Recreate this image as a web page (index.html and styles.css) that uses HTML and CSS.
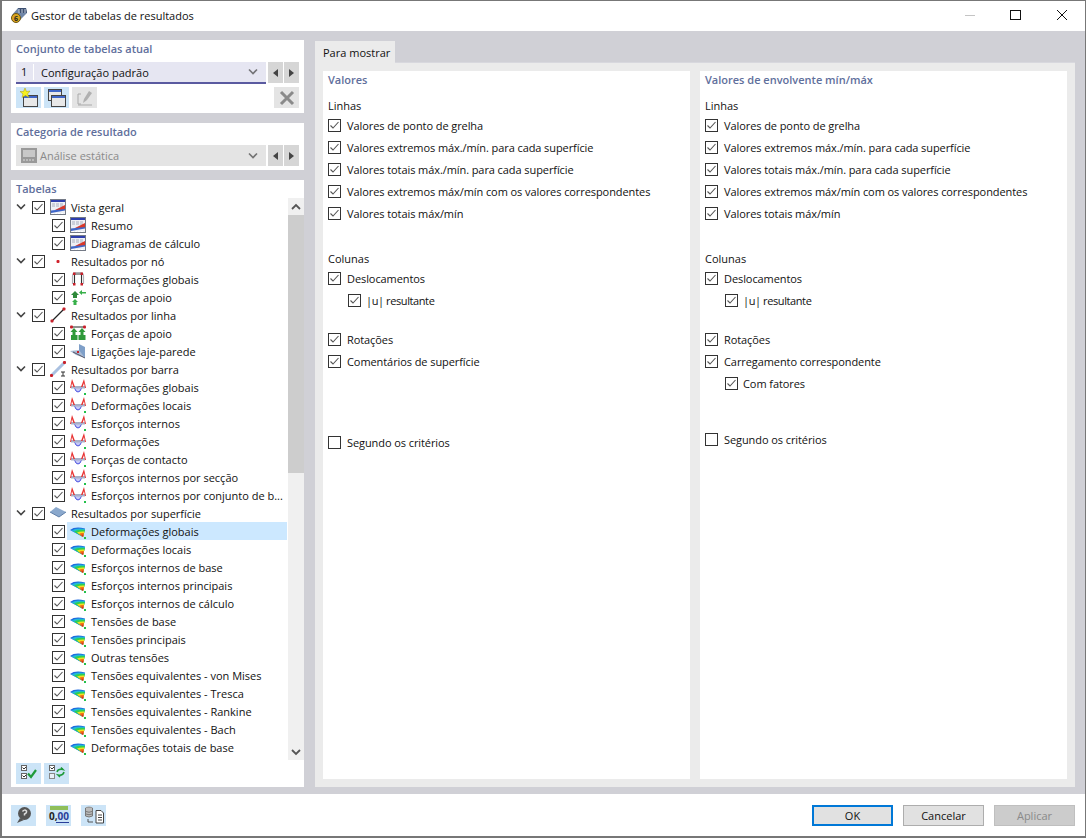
FILE: index.html
```html
<!DOCTYPE html>
<html lang="pt">
<head>
<meta charset="utf-8">
<title>Gestor de tabelas de resultados</title>
<link rel="stylesheet" href="styles.css">
</head>
<body>
<svg class="defs" width="0" height="0">
  <symbol id="chk" viewBox="0 0 13 13"><rect x="0.5" y="0.5" width="12" height="12" fill="#fff" stroke="#333"/><path d="M2.500 6.500 L5 9 L10.500 3" fill="none" stroke="#555" stroke-width="1.100"/></symbol>
  <symbol id="chev" viewBox="0 0 10 10"><path d="M1 2.500 L5 6.500 L9 2.500" fill="none" stroke="#444" stroke-width="1.600"/></symbol>
  <symbol id="tbl" viewBox="0 0 16 16"><rect width="16" height="16" fill="#747a86"/><rect x="1" y="1" width="14" height="14" fill="#eef0f5"/><rect x="1" y="1" width="14" height="2" fill="#2f3fae"/><path d="M2 5h12M2 7h12" stroke="#a8aebc" stroke-dasharray="3 1"/><path d="M5 11 L15 6 V11Z" fill="#d8382a"/><path d="M1 11.500 L15 10 V11.500 L1 14Z" fill="#3f66c8"/><path d="M2 14.500h12" stroke="#fff" stroke-dasharray="2 1"/></symbol>
  <symbol id="dot" viewBox="0 0 16 16"><rect x="6.500" y="7" width="3" height="3" rx="1" fill="#d0202a"/></symbol>
  <symbol id="frame" viewBox="0 0 16 16"><path d="M2.500 13 V5 Q2.500 1.500 6 1.500 H10 Q13.500 1.500 13.500 5 V13" fill="none" stroke="#b0b0b6" stroke-width="1.200"/><path d="M4.500 13 V3 H11.500 V13" fill="none" stroke="#333" stroke-width="1.100"/><g fill="#c8202a"><rect x="3" y="1.500" width="2.500" height="2.500"/><rect x="10.500" y="1.500" width="2.500" height="2.500"/><rect x="3" y="12" width="2.500" height="2.500"/><rect x="10.500" y="12" width="2.500" height="2.500"/></g></symbol>
  <symbol id="sup" viewBox="0 0 16 16"><path d="M5 2 L9 6 H7 V9 H3 V6 H1Z" fill="#2f8a3a"/><path d="M5 10 L8 13 H6.500 V16 H3.500 V13 H2Z" fill="#38b04a"/><path d="M16 3 H12 V1 L9 3.500 L12 6 V4.500 H16Z" fill="#38b04a"/></symbol>
  <symbol id="line" viewBox="0 0 16 16"><path d="M2 14 L14 2" stroke="#222" stroke-width="1.200"/><rect x="0.500" y="12.500" width="3" height="3" rx="1" fill="#c8202a"/><rect x="12.500" y="0.500" width="3" height="3" rx="1" fill="#c8202a"/></symbol>
  <symbol id="lsup" viewBox="0 0 16 16"><path d="M1 2H15" stroke="#222"/><path d="M4 3 L7.500 7H5.500V10H7.500V15H1V10H2.500V7H.5Z" fill="#2f9a3a"/><path d="M12 3 L15.500 7H13.500V10H15.500V15H8.500V10H10.500V7H8.500Z" fill="#2f9a3a"/><rect y="0.500" width="3" height="3" rx="1" fill="#c8202a"/><rect x="13" y="0.500" width="3" height="3" rx="1" fill="#c8202a"/></symbol>
  <symbol id="wall" viewBox="0 0 16 16"><path d="M9 1 L15 4 V15 L9 10Z" fill="#7f9fc8"/><path d="M0 8 L9 7 L15 15 L6 12Z" fill="#a9bcd6"/><path d="M3 9 L15 15" stroke="#556"/><rect x="7" y="8" width="2" height="2" fill="#c8202a"/></symbol>
  <symbol id="bar" viewBox="0 0 16 16"><path d="M2 14 L14 2" stroke="#a9c0e0" stroke-width="3"/><rect x="0" y="13" width="3" height="3" rx="1" fill="#c8202a"/><rect x="13" y="0" width="3" height="3" rx="1" fill="#c8202a"/><path d="M11 11H15M13 11V15M11 15H15" stroke="#333" fill="none"/></symbol>
  <symbol id="beam" viewBox="0 0 16 16"><path d="M4 7 H12 L10 12 Q8 14 6 12Z" fill="#c4c8f6"/><path d="M4 8 L6 12 Q8 14 10 12 L12 8" fill="none" stroke="#4a50e0"/><path d="M1 7H15V9.500H1Z" fill="#a8b0c8"/><path d="M0 9 L2 0 L5 8 H3.500 L2 4 L1 9Z M16 9 L14 0 L11 8 H12.500 L14 4 L15 9Z" fill="#e83030"/><rect x="14" y="14" width="2" height="2" fill="#22c04a"/></symbol>
  <symbol id="plate" viewBox="0 0 16 16"><path d="M0 7 L6 2 L16 7 L9 12Z" fill="#8aa8cc"/><path d="M0 7 L9 12 L16 7" fill="none" stroke="#5f7fa8"/></symbol>
  <symbol id="rain" viewBox="0 0 16 16"><path d="M0 7 Q5 3 15 5.500 L13 14Z" fill="#1e6ae0"/><path d="M1.500 7.500 Q6 4.500 15 6 L13 14Z" fill="#20b8d8"/><path d="M4 8.500 Q8 6 15 7 L13 14Z" fill="#30d050"/><path d="M7 9.500 Q10 8 14.500 8.500 L13 14Z" fill="#f0e020"/><path d="M9 11 Q11 9.500 14 10 L13 14Z" fill="#f07018"/><path d="M11 12 L13.500 11.500 L13 14Z" fill="#e02828"/><rect x="14" y="14" width="2" height="2" fill="#22c04a"/></symbol>
  <symbol id="win" viewBox="0 0 20 20"><rect x="4.500" y="7.500" width="14" height="11" fill="#e8e8e8" stroke="#444"/><rect x="5" y="8" width="13" height="2" fill="#3f66c8"/></symbol>
</svg>

<div class="window">
  <header class="titlebar">
    <svg class="appicon" viewBox="0 0 18 18"><path d="M2 9 L8 2 L16 2 L17 7 L10 14 L5 14Z" fill="#6f86a8"/><path d="M8 2 L16 2 L17 7 L10 7Z" fill="#3c4f70"/><path d="M9 3v4M12 3v4M15 3v4" stroke="#c8d2e0"/><circle cx="6" cy="12" r="4.500" fill="#d9a520" stroke="#6e5610"/><text x="6" y="15" class="appnum">6</text></svg>
    <span class="title">Gestor de tabelas de resultados</span>
    <div class="winctl">
      <span class="wbtn"><svg width="12" height="12" viewBox="0 0 12 12"><path d="M1 6.500H11" stroke="#c4c4c4"/></svg></span>
      <span class="wbtn"><svg width="12" height="12" viewBox="0 0 12 12"><rect x=".5" y="1.500" width="10" height="9" fill="none" stroke="#111"/></svg></span>
      <span class="wbtn"><svg width="12" height="12" viewBox="0 0 12 12"><path d="M1 1L11 11M11 1L1 11" stroke="#111"/></svg></span>
    </div>
  </header>

  <div class="main">
    <aside class="left">
      <section class="panel p-set">
        <h2 class="ptitle">Conjunto de tabelas atual</h2>
        <div class="comborow">
          <div class="combo active"><span class="cnum">1</span><span class="ctext">Configuração padrão</span><svg class="cchev"><use href="#chev"/></svg></div>
          <span class="arrow"><i class="tl"></i></span><span class="arrow"><i class="tr"></i></span>
        </div>
        <div class="toolrow">
          <span class="tool blue"><svg width="20" height="20" viewBox="0 0 20 20"><use href="#win"/><path d="M6 0 L7.500 3.500 L11 3 L8.500 6 L10 9.500 L6.500 7.500 L3 9.500 L4 6 L1 3.500 L4.500 3.500Z" fill="#f6f020" stroke="#a89a10" stroke-width=".5"/></svg></span>
          <span class="tool blue"><svg width="20" height="20" viewBox="0 0 20 20"><rect x="1.500" y="1.500" width="13" height="11" fill="#e8e8e8" stroke="#444"/><rect x="2" y="2" width="12" height="2" fill="#3f66c8"/><use href="#win"/></svg></span>
          <span class="tool grey"><svg width="20" height="20" viewBox="0 0 20 20"><path d="M6 6H3V16H6M3 17H17" fill="none" stroke="#aaa"/><path d="M8 15 L9 11 L14 3 L17 5 L12 12Z" fill="#b0b0b0"/></svg></span>
          <span class="tool grey push"><svg width="20" height="20" viewBox="0 0 20 20"><path d="M4 4L16 16M16 4L4 16" stroke="#8a8a8a" stroke-width="3"/></svg></span>
        </div>
      </section>

      <section class="panel p-cat">
        <h2 class="ptitle">Categoria de resultado</h2>
        <div class="comborow">
          <div class="combo disabled"><svg class="cicon" width="16" height="16" viewBox="0 0 16 16"><rect width="16" height="15" fill="#999"/><rect x="2" y="2" width="12" height="7" fill="#c8c8c8"/><path d="M2 12H14" stroke="#ddd" stroke-dasharray="2 1"/></svg><span class="ctext">Análise estática</span><svg class="cchev"><use href="#chev"/></svg></div>
          <span class="arrow"><i class="tl"></i></span><span class="arrow"><i class="tr"></i></span>
        </div>
      </section>

      <section class="panel p-tree">
        <h2 class="ptitle tt">Tabelas</h2>
        <div class="treewrap">
          <ul class="tree">
            <li class="r1"><svg class="chev"><use href="#chev"/></svg><svg class="ck"><use href="#chk"/></svg><svg class="ic"><use href="#tbl"/></svg><span>Vista geral</span></li>
            <li class="r2"><svg class="ck"><use href="#chk"/></svg><svg class="ic"><use href="#tbl"/></svg><span>Resumo</span></li>
            <li class="r2"><svg class="ck"><use href="#chk"/></svg><svg class="ic"><use href="#tbl"/></svg><span>Diagramas de cálculo</span></li>
            <li class="r1"><svg class="chev"><use href="#chev"/></svg><svg class="ck"><use href="#chk"/></svg><svg class="ic"><use href="#dot"/></svg><span>Resultados por nó</span></li>
            <li class="r2"><svg class="ck"><use href="#chk"/></svg><svg class="ic"><use href="#frame"/></svg><span>Deformações globais</span></li>
            <li class="r2"><svg class="ck"><use href="#chk"/></svg><svg class="ic"><use href="#sup"/></svg><span>Forças de apoio</span></li>
            <li class="r1"><svg class="chev"><use href="#chev"/></svg><svg class="ck"><use href="#chk"/></svg><svg class="ic"><use href="#line"/></svg><span>Resultados por linha</span></li>
            <li class="r2"><svg class="ck"><use href="#chk"/></svg><svg class="ic"><use href="#lsup"/></svg><span>Forças de apoio</span></li>
            <li class="r2"><svg class="ck"><use href="#chk"/></svg><svg class="ic"><use href="#wall"/></svg><span>Ligações laje-parede</span></li>
            <li class="r1"><svg class="chev"><use href="#chev"/></svg><svg class="ck"><use href="#chk"/></svg><svg class="ic"><use href="#bar"/></svg><span>Resultados por barra</span></li>
            <li class="r2"><svg class="ck"><use href="#chk"/></svg><svg class="ic"><use href="#beam"/></svg><span>Deformações globais</span></li>
            <li class="r2"><svg class="ck"><use href="#chk"/></svg><svg class="ic"><use href="#beam"/></svg><span>Deformações locais</span></li>
            <li class="r2"><svg class="ck"><use href="#chk"/></svg><svg class="ic"><use href="#beam"/></svg><span>Esforços internos</span></li>
            <li class="r2"><svg class="ck"><use href="#chk"/></svg><svg class="ic"><use href="#beam"/></svg><span>Deformações</span></li>
            <li class="r2"><svg class="ck"><use href="#chk"/></svg><svg class="ic"><use href="#beam"/></svg><span>Forças de contacto</span></li>
            <li class="r2"><svg class="ck"><use href="#chk"/></svg><svg class="ic"><use href="#beam"/></svg><span>Esforços internos por secção</span></li>
            <li class="r2"><svg class="ck"><use href="#chk"/></svg><svg class="ic"><use href="#beam"/></svg><span>Esforços internos por conjunto de b...</span></li>
            <li class="r1"><svg class="chev"><use href="#chev"/></svg><svg class="ck"><use href="#chk"/></svg><svg class="ic"><use href="#plate"/></svg><span>Resultados por superfície</span></li>
            <li class="r2 sel"><svg class="ck"><use href="#chk"/></svg><svg class="ic"><use href="#rain"/></svg><span>Deformações globais</span></li>
            <li class="r2"><svg class="ck"><use href="#chk"/></svg><svg class="ic"><use href="#rain"/></svg><span>Deformações locais</span></li>
            <li class="r2"><svg class="ck"><use href="#chk"/></svg><svg class="ic"><use href="#rain"/></svg><span>Esforços internos de base</span></li>
            <li class="r2"><svg class="ck"><use href="#chk"/></svg><svg class="ic"><use href="#rain"/></svg><span>Esforços internos principais</span></li>
            <li class="r2"><svg class="ck"><use href="#chk"/></svg><svg class="ic"><use href="#rain"/></svg><span>Esforços internos de cálculo</span></li>
            <li class="r2"><svg class="ck"><use href="#chk"/></svg><svg class="ic"><use href="#rain"/></svg><span>Tensões de base</span></li>
            <li class="r2"><svg class="ck"><use href="#chk"/></svg><svg class="ic"><use href="#rain"/></svg><span>Tensões principais</span></li>
            <li class="r2"><svg class="ck"><use href="#chk"/></svg><svg class="ic"><use href="#rain"/></svg><span>Outras tensões</span></li>
            <li class="r2"><svg class="ck"><use href="#chk"/></svg><svg class="ic"><use href="#rain"/></svg><span>Tensões equivalentes - von Mises</span></li>
            <li class="r2"><svg class="ck"><use href="#chk"/></svg><svg class="ic"><use href="#rain"/></svg><span>Tensões equivalentes - Tresca</span></li>
            <li class="r2"><svg class="ck"><use href="#chk"/></svg><svg class="ic"><use href="#rain"/></svg><span>Tensões equivalentes - Rankine</span></li>
            <li class="r2"><svg class="ck"><use href="#chk"/></svg><svg class="ic"><use href="#rain"/></svg><span>Tensões equivalentes - Bach</span></li>
            <li class="r2"><svg class="ck"><use href="#chk"/></svg><svg class="ic"><use href="#rain"/></svg><span>Deformações totais de base</span></li>
          </ul>
          <div class="scroll">
            <span class="sbtn"><svg width="10" height="10" viewBox="0 0 10 10"><path d="M1 7 L5 3 L9 7" fill="none" stroke="#555" stroke-width="1.800"/></svg></span>
            <div class="strack"><div class="sthumb"></div></div>
            <span class="sbtn"><svg width="10" height="10" viewBox="0 0 10 10"><path d="M1 3 L5 7 L9 3" fill="none" stroke="#555" stroke-width="1.800"/></svg></span>
          </div>
        </div>
        <div class="toolrow treetools">
          <span class="tool blue"><svg width="20" height="20" viewBox="0 0 20 20"><rect x="2.500" y="1.500" width="5" height="5" fill="#fff" stroke="#666"/><rect x="2.500" y="9.500" width="5" height="5" fill="#fff" stroke="#666"/><path d="M3.500 3.500l1.500 1.500 2-2M3.500 11.500l1.500 1.500 2-2" fill="none" stroke="#333"/><path d="M9 9.500 L12 13 L17 6" fill="none" stroke="#1f9a3a" stroke-width="2.200"/></svg></span>
          <span class="tool blue"><svg width="20" height="20" viewBox="0 0 20 20"><rect x="2.500" y="1.500" width="5" height="5" fill="#fff" stroke="#666"/><rect x="2.500" y="9.500" width="5" height="5" fill="#e8f0f8" stroke="#888"/><path d="M3.500 3.500l1.500 1.500 2-2" fill="none" stroke="#333"/><path d="M10 8 Q11 4.500 16 5.500 L14 3.500M17 8 Q16 12 11 11 L13 13" fill="none" stroke="#1f9a3a" stroke-width="1.500"/></svg></span>
        </div>
      </section>
    </aside>

    <div class="right">
      <div class="tabs"><span class="tab">Para mostrar</span></div>
      <div class="tabbody">
        <section class="col">
          <h2 class="ptitle ct">Valores</h2>
          <div class="lbl first">Linhas</div>
          <div class="opt"><svg class="ck"><use href="#chk"/></svg>Valores de ponto de grelha</div>
          <div class="opt"><svg class="ck"><use href="#chk"/></svg>Valores extremos máx./mín. para cada superfície</div>
          <div class="opt"><svg class="ck"><use href="#chk"/></svg>Valores totais máx./mín. para cada superfície</div>
          <div class="opt"><svg class="ck"><use href="#chk"/></svg>Valores extremos máx/mín com os valores correspondentes</div>
          <div class="opt"><svg class="ck"><use href="#chk"/></svg>Valores totais máx/mín</div>
          <div class="lbl second">Colunas</div>
          <div class="opt"><svg class="ck"><use href="#chk"/></svg>Deslocamentos</div>
          <div class="opt sub tight"><svg class="ck"><use href="#chk"/></svg>|u| resultante</div>
          <div class="opt gap"><svg class="ck"><use href="#chk"/></svg>Rotações</div>
          <div class="opt"><svg class="ck"><use href="#chk"/></svg>Comentários de superfície</div>
          <div class="opt crit-a"><svg class="ck" viewBox="0 0 13 13"><rect class="un" x="0.500" y="0.500" width="12" height="12"/></svg>Segundo os critérios</div>
        </section>
        <section class="col">
          <h2 class="ptitle ct">Valores de envolvente mín/máx</h2>
          <div class="lbl first">Linhas</div>
          <div class="opt"><svg class="ck"><use href="#chk"/></svg>Valores de ponto de grelha</div>
          <div class="opt"><svg class="ck"><use href="#chk"/></svg>Valores extremos máx./mín. para cada superfície</div>
          <div class="opt"><svg class="ck"><use href="#chk"/></svg>Valores totais máx./mín. para cada superfície</div>
          <div class="opt"><svg class="ck"><use href="#chk"/></svg>Valores extremos máx/mín com os valores correspondentes</div>
          <div class="opt"><svg class="ck"><use href="#chk"/></svg>Valores totais máx/mín</div>
          <div class="lbl second">Colunas</div>
          <div class="opt"><svg class="ck"><use href="#chk"/></svg>Deslocamentos</div>
          <div class="opt sub tight"><svg class="ck"><use href="#chk"/></svg>|u| resultante</div>
          <div class="opt gap"><svg class="ck"><use href="#chk"/></svg>Rotações</div>
          <div class="opt"><svg class="ck"><use href="#chk"/></svg>Carregamento correspondente</div>
          <div class="opt sub"><svg class="ck"><use href="#chk"/></svg>Com fatores</div>
          <div class="opt crit-b"><svg class="ck" viewBox="0 0 13 13"><rect class="un" x="0.500" y="0.500" width="12" height="12"/></svg>Segundo os critérios</div>
        </section>
      </div>
    </div>
  </div>

  <footer class="footer">
    <span class="tool blue"><svg width="20" height="20" viewBox="0 0 20 20"><circle cx="10.500" cy="8.500" r="6.500" fill="#555"/><path d="M6 13 L3 18 L10 15Z" fill="#555"/><path d="M8.500 6.500 Q10.500 4 12.500 6 Q13 8 10.500 9V10.500" fill="none" stroke="#ddd" stroke-width="1.500"/></svg></span>
    <span class="tool blue"><svg width="22" height="20" viewBox="0 0 22 20"><rect x="2" y="1" width="18" height="4" fill="#8fbf5a"/><text x="1" y="15" class="num">0,<tspan class="numb">00</tspan></text><path d="M8 17.500H21" stroke="#2a3f9a"/></svg></span>
    <span class="tool blue"><svg width="22" height="20" viewBox="0 0 22 20"><ellipse cx="6" cy="3" rx="3.500" ry="1.500" fill="#999"/><path d="M2.500 3V11Q6 13 9.500 11V3" fill="#bbb" stroke="#777"/><path d="M3 6.500Q6 8 9 6.500M3 9Q6 10.500 9 9" fill="none" stroke="#777"/><path d="M5 14V17H10" fill="none" stroke="#555"/><path d="M13 5.500H18L20.500 8V18H13Z" fill="#fff" stroke="#444"/><path d="M15 10H19M15 12.500H19M15 15H19" stroke="#444"/></svg></span>
    <div class="actions">
      <button class="btn ok">OK</button>
      <button class="btn">Cancelar</button>
      <button class="btn off">Aplicar</button>
    </div>
  </footer>
</div>
</body>
</html>
```
FILE: styles.css
```css
* { box-sizing: border-box; }
html, body { margin: 0; padding: 0; background: #fff; }
body { font-family: "Open Sans", "Noto Sans", sans-serif; font-size: 11px; color: #111; width: 1087px; height: 839px; overflow: hidden; }
.defs { position: absolute; }
svg { display: block; flex: none; }

.window { width: 1086px; height: 838px; border: 1px solid #777; border-width: 1px 1px 2px 2px; display: flex; flex-direction: column; background: #fff; }
.titlebar { height: 30px; display: flex; align-items: center; padding: 0 0 2px 8px; flex: none; }
.appicon { width: 18px; height: 18px; margin-right: 3px; }
.appnum { font-size: 7px; font-weight: 700; text-anchor: middle; fill: #222; }
.title { font-size: 11px; }
.winctl { margin-left: auto; display: flex; height: 30px; }
.wbtn { width: 46px; display: flex; align-items: center; justify-content: center; }

.main { flex: 1; background: #d0d0d6; display: flex; padding: 9px 10px 7px 9px; gap: 11px; min-height: 0; }
.left { width: 293px; display: flex; flex-direction: column; gap: 10px; flex: none; }
.panel { background: #fff; padding: 0 5px; }
.ptitle { margin: 0; font-size: 11px; font-weight: 600; color: #5f6f9c; line-height: 18px; }
.p-set { height: 73px; }
.p-cat { height: 47px; }
.p-tree { flex: 1; display: flex; flex-direction: column; padding-right: 0; }
.tt { height: 18px; line-height: 17px; }

.comborow { display: flex; gap: 1px; height: 21px; margin-top: 4px; }
.p-set .comborow { height: 22px; }
.p-set .arrow { height: 21px; }
.p-set .toolrow { margin-top: 3px; }
.combo { width: 251px; display: flex; align-items: center; background: #e6e6f2; border-bottom: 2px solid #5a5aa0; margin-right: 1px; }
.combo.disabled { background: #e4e4e4; border: 0; color: #8a8a8a; padding-left: 5px; }
.cnum { width: 18px; padding-left: 5px; border-right: 1px solid #fff; height: 16px; line-height: 16px; margin-right: 7px; }
.cicon { margin-right: 3px; }
.ctext { flex: 1; }
.cchev { width: 10px; height: 10px; margin-right: 8px; opacity: .7; }
.arrow { width: 15px; background: #d6d6d6; display: flex; align-items: center; justify-content: center; }
.tl { border: 4px solid transparent; border-right: 5px solid #444; border-left: 0; }
.tr { border: 4px solid transparent; border-left: 5px solid #444; border-right: 0; }
.toolrow { display: flex; gap: 3px; margin-top: 4px; }
.tool { width: 25px; height: 21px; display: flex; align-items: center; justify-content: center; flex: none; }
.blue { background: #cce4f7; }
.grey { background: #e4e4e4; }
.push { margin-left: auto; }

.treewrap { display: flex; height: 562px; }
.tree { list-style: none; margin: 0; padding: 0; width: 272px; }
.tree li { height: 18px; display: flex; align-items: center; white-space: nowrap; }
.r1 { padding-left: 0; }
.r2 { padding-left: 36px; }
.chev { width: 10px; height: 10px; margin-right: 6px; }
.ck { width: 13px; height: 13px; margin-right: 5px; }
.ic { width: 16px; height: 16px; margin-right: 5px; }
.tree .sel { background: linear-gradient(to right, transparent 51px, #cce8ff 51px); margin-right: 1px; }
.scroll { width: 16px; display: flex; flex-direction: column; background: #f0f0f0; }
.sbtn { height: 17px; display: flex; align-items: center; justify-content: center; flex: none; }
.strack { flex: 1; }
.sthumb { height: 258px; background: #cdcdcd; }
.treetools { margin-top: 3px; }

.right { flex: 1; display: flex; flex-direction: column; min-width: 0; }
.tabs { height: 21px; display: flex; margin-top: 1px; flex: none; }
.tab { width: 80px; background: #ebebeb; padding: 0 8px; line-height: 24px; height: 22px; white-space: nowrap; position: relative; }
.tabbody { flex: 1; background: #ebebeb; padding: 8px; display: flex; gap: 10px; min-height: 0; border-top: 1px solid #d8d8de; }
.col { flex: 1; background: #fff; padding: 0 5px; }
.ct { line-height: 17px; }
.lbl { line-height: 16px; }
.first { margin-top: 10px; }
.second { margin-top: 27px; }
.opt { height: 22px; display: flex; align-items: center; white-space: nowrap; letter-spacing: -0.08px; }
.opt .ck { margin-right: 6px; }
.sub { padding-left: 20px; }
.sub .ck { margin-right: 5px; }
.tight { letter-spacing: -0.4px; }
.gap { margin-top: 17px; }
.crit-a { margin-top: 59px; }
.crit-b { margin-top: 34px; }
.un { fill: #fff; stroke: #333; }

.footer { height: 42px; flex: none; display: flex; align-items: center; padding: 0 10px 0 9px; gap: 10px; }
.num { font-size: 10px; font-weight: 700; fill: #222; }
.numb { fill: #2a3f9a; }
.actions { margin-left: auto; display: flex; gap: 10px; }
.btn { width: 81px; height: 21px; background: #e1e1e1; border: 1px solid #adadad; font: inherit; color: #111; padding: 0; }
.ok { border: 2px solid #0078d7; }
.off { background: #cccccc; border-color: #bfbfbf; color: #8a8a8a; }
```
